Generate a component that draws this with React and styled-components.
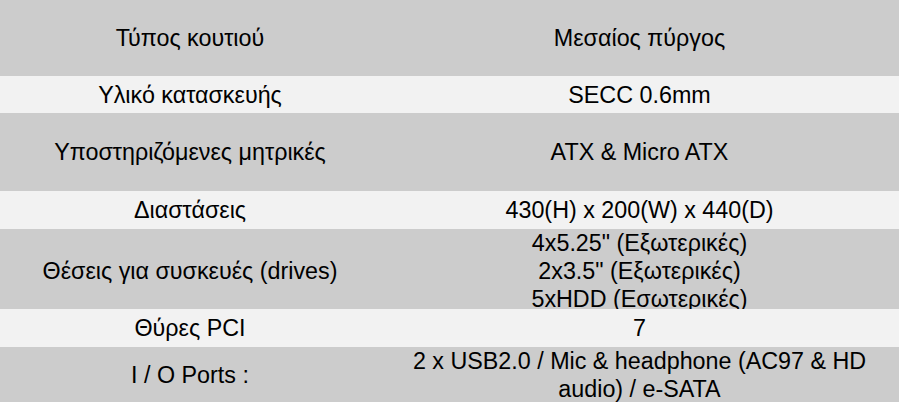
import React from "react";
import styled, { createGlobalStyle } from "styled-components";

const GlobalStyle = createGlobalStyle`
  html, body {
    margin: 0;
    padding: 0;
    background: #ffffff;
  }
  body {
    font-family: "Liberation Sans", Arial, sans-serif;
  }
`;

const specs = [
  { label: "Τύπος κουτιού", value: ["Μεσαίος πύργος"], h: 76 },
  { label: "Υλικό κατασκευής", value: ["SECC 0.6mm"], h: 37 },
  { label: "Υποστηριζόμενες μητρικές", value: ["ATX & Micro ATX"], h: 78 },
  { label: "Διαστάσεις", value: ["430(H) x 200(W) x 440(D)"], h: 38 },
  {
    label: "Θέσεις για συσκευές (drives)",
    value: [
      '4x5.25" (Εξωτερικές)',
      '2x3.5" (Εξωτερικές)',
      "5xHDD (Εσωτερικές)",
    ],
    h: 80,
  },
  { label: "Θύρες PCI", value: ["7"], h: 38 },
  {
    label: "I / O Ports :",
    value: ["2 x USB2.0 / Mic & headphone (AC97 & HD audio) / e-SATA"],
    h: 55,
  },
];

const App = () => {
  return (
    <>
      <GlobalStyle />
      <Table>
        {specs.map((row, i) => (
          <Row key={row.label} $shade={i % 2 === 0} $h={row.h}>
            <Label>{row.label}</Label>
            <Value>
              {row.value.map((line) => (
                <Line key={line}>{line}</Line>
              ))}
            </Value>
          </Row>
        ))}
      </Table>
    </>
  );
};

export default App;

const Table = styled.div`
  width: 899px;
  display: flex;
  flex-direction: column;
  overflow: hidden;
  height: 402px;
`;

const Row = styled.div`
  display: grid;
  grid-template-columns: 380px 519px;
  height: ${(p) => p.$h}px;
  flex-shrink: 0;
  background-color: ${(p) => (p.$shade ? "#cccccc" : "#f2f2f2")};
  color: #000;
  font-size: 23.3px;
  line-height: 28px;
`;

const Label = styled.div`
  display: flex;
  align-items: center;
  justify-content: center;
  text-align: center;
  padding: 0 6px;
`;

const Value = styled.div`
  display: flex;
  flex-direction: column;
  align-items: center;
  justify-content: center;
  text-align: center;
  padding: 0 8px;
`;

const Line = styled.div`
  white-space: normal;
`;
